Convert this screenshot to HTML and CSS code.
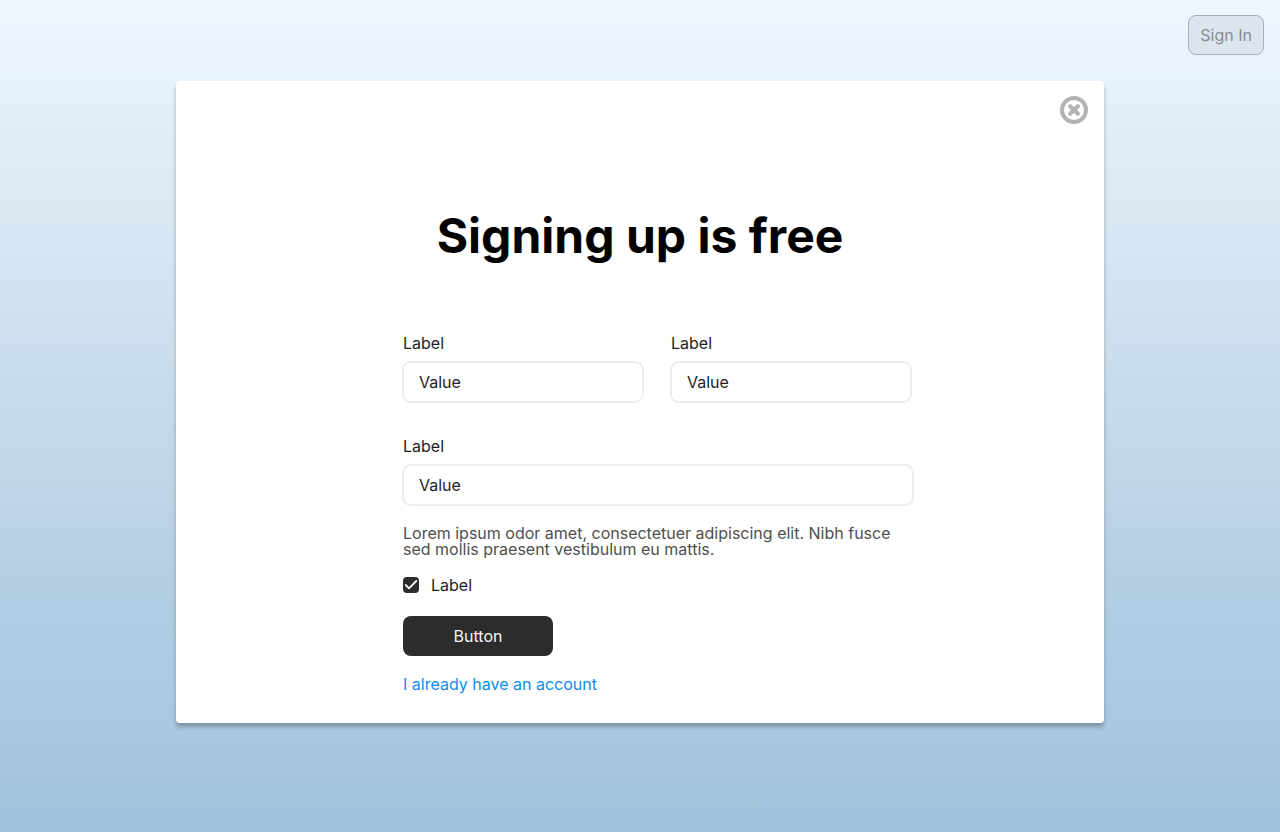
FILE: index.html
```html
<!DOCTYPE html>
<html lang="en">
<head>
  <meta charset="utf-8">
  <meta name="viewport" content="width=device-width, initial-scale=1">
  <title>Sign up</title>
  <link rel="stylesheet" href="styles.css">
</head>
<body>
  <header class="topbar">
    <button class="sign-in" type="button">Sign In</button>
  </header>
  <main class="card">
    <div class="card-head">
      <button class="close" type="button" aria-label="Close">
        <svg viewBox="0 0 28 28" width="28" height="28" fill="none" stroke="#b3b3b3" aria-hidden="true">
          <circle cx="14" cy="14" r="12" stroke-width="4"/>
          <path d="M10.2 10.2l7.6 7.6M17.8 10.2l-7.6 7.6" stroke-width="4.2" stroke-linecap="round"/>
        </svg>
      </button>
    </div>
    <h1 class="title">Signing up is free</h1>
    <form class="form">
      <div class="row">
        <div class="field">
          <label for="first">Label</label>
          <input id="first" type="text" value="Value">
        </div>
        <div class="field">
          <label for="second">Label</label>
          <input id="second" type="text" value="Value">
        </div>
      </div>
      <div class="field">
        <label for="third">Label</label>
        <input id="third" type="text" value="Value">
      </div>
      <p class="note">Lorem ipsum odor amet, consectetuer adipiscing elit. Nibh fusce sed mollis praesent vestibulum eu mattis.</p>
      <div class="check">
        <span class="box">
          <input id="agree" type="checkbox" checked>
          <svg class="tick" viewBox="0 0 16 16" width="16" height="16" fill="none" stroke="#f5f5f5" stroke-width="1.8" stroke-linecap="round" stroke-linejoin="round" aria-hidden="true">
            <path d="M13.3 4L6 11.3 2.7 8"/>
          </svg>
        </span>
        <label for="agree">Label</label>
      </div>
      <button class="submit" type="button">Button</button>
      <a class="account" href="#">I already have an account</a>
    </form>
  </main>
</body>
</html>
```
FILE: styles.css
```css
* {
  box-sizing: border-box;
}

body {
  margin: 0;
  min-height: 100vh;
  padding: 15px 16px;
  background: linear-gradient(180deg, #eff6ff 0%, #e0edf6 17%, #cfe1ef 38%, #c0d5e8 59%, #b4cfe4 69%, #abc9e0 86%, #a0c1da 100%);
  font-family: Inter, "Liberation Sans", sans-serif;
  font-size: 16px;
  line-height: 22px;
  color: #1e1e1e;
}

button,
input {
  font: inherit;
  color: inherit;
}

.topbar {
  display: flex;
  justify-content: flex-end;
}

.sign-in {
  height: 40px;
  padding: 0 11px;
  border: 1px solid #a5afb8;
  border-radius: 8px;
  background: #dce5ee;
  color: #838d95;
}

.card {
  max-width: 928px;
  margin: 26px auto 0;
  padding: 15px 16px 28px;
  border-radius: 4px;
  background: #fff;
  box-shadow: 0 4px 4px rgba(0, 0, 0, 0.25);
}

.card-head {
  display: flex;
  justify-content: flex-end;
}

.close {
  display: flex;
  padding: 0;
  border: 0;
  background: none;
}

.title {
  margin: 83px 0 67px;
  font-size: 48px;
  line-height: 58px;
  font-weight: 700;
  text-align: center;
  color: #000;
}

.form {
  display: flex;
  flex-direction: column;
  align-items: flex-start;
  max-width: 546px;
  margin: 0 auto;
  padding-left: 36px;
}

.row {
  display: grid;
  grid-template-columns: repeat(2, minmax(0, 240px));
  gap: 28px;
  width: 100%;
  margin-bottom: 33px;
}

.field {
  display: flex;
  flex-direction: column;
  gap: 8px;
  width: 100%;
}

.field input {
  width: 100%;
  height: 40px;
  padding: 0 15px;
  border: 1px solid #f0f0f0;
  border-radius: 8px;
  background: #fff;
  box-shadow: 0 0 0 1px #ebebeb;
}

.note {
  margin: 20px 0 17px;
  line-height: 16px;
  color: #4f4f4f;
}

.check {
  display: flex;
  align-items: center;
  gap: 12px;
  margin-bottom: 20px;
}

.box {
  display: grid;
}

.box input,
.tick {
  grid-area: 1 / 1;
}

.box input {
  appearance: none;
  width: 16px;
  height: 16px;
  margin: 0;
  border-radius: 4px;
  background: #2c2c2c;
}

.tick {
  visibility: hidden;
  pointer-events: none;
}

.box input:checked + .tick {
  visibility: visible;
}

.submit {
  width: 150px;
  height: 40px;
  margin-bottom: 17px;
  border: 0;
  border-radius: 8px;
  background: #2c2c2c;
  color: #f5f5f5;
}

.account {
  color: #0d8bf2;
  text-decoration: none;
}
```
